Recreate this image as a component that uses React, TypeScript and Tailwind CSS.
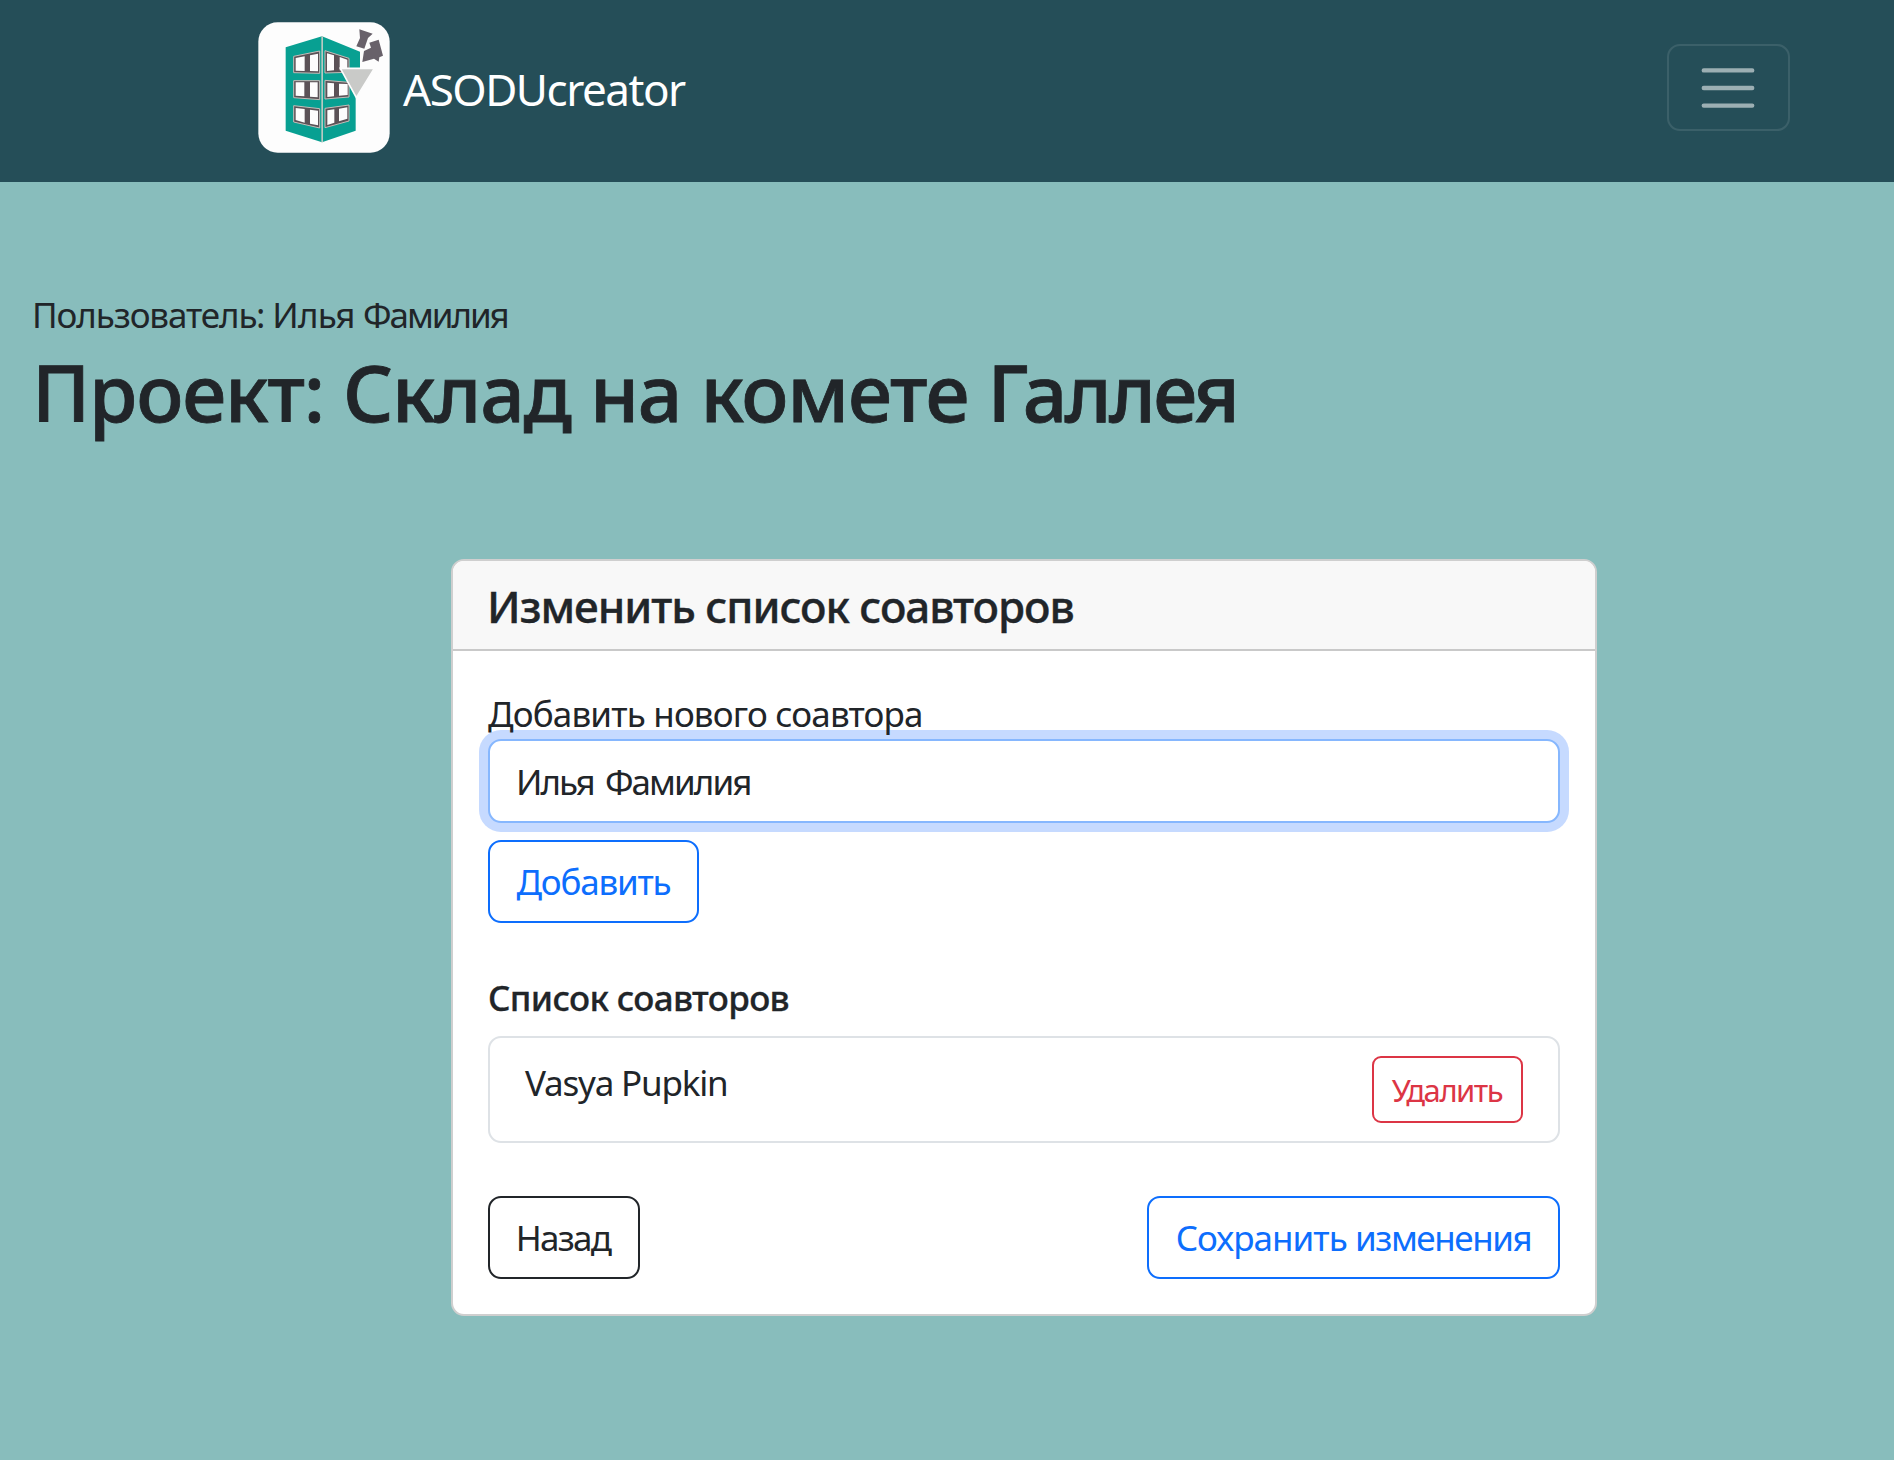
import type { ReactNode } from 'react';

function Logo() {
  return (
    <svg viewBox="24 21 396 393" className="h-[131px] w-[132px] shrink-0" aria-hidden="true">
      <rect x="25" y="22" width="394" height="391" rx="58" fill="#fdfdfd" />
      <path d="M107 97 216 64V382L107 347Z" fill="#08a092" />
      <path d="M216 64 330 110V160H317V347L216 382Z" fill="#08a092" />
      <path d="M216.500 64V382" stroke="#b9c9c2" strokeWidth="5" />
      <g fill="#5b5257" stroke="#c5bdb9" strokeWidth="3">
        <path d="M131 124 209 108V175L131 173Z" />
        <path d="M131 197H209V254L131 248Z" />
        <path d="M131 272 209 281V339L131 321Z" />
        <path d="M225 107 297 130V172L225 174Z" />
        <path d="M225 196 297 202V246L225 252Z" />
        <path d="M225 280 297 270V318L225 338Z" />
      </g>
      <g fill="#fdfdfd">
        <path d="M137 129 164 124V168L137 167Z" />
        <path d="M180 121 204 116V169L180 168Z" />
        <path d="M137 202H163V244L137 242Z" />
        <path d="M180 202H203V247L180 245Z" />
        <path d="M137 279 164 282V323L137 315Z" />
        <path d="M180 284 204 287V331L180 326Z" />
        <path d="M231 115 252 121V166L231 168Z" />
        <path d="M269 126 292 134V166H269Z" />
        <path d="M232 203 252 205V244L232 246Z" />
        <path d="M267 206 293 207V240L267 242Z" />
        <path d="M232 286 253 283V323L232 330Z" />
        <path d="M267 281 292 277V311L267 319Z" />
      </g>
      <path d="M271 160H373L319 248Z" fill="#c9cac8" stroke="#fdfdfd" strokeWidth="5" />
      <path d="M328 43 368 56 354 69 343 101 319 94 330 69Z" fill="#68616a" />
      <path d="M386 74 399 122 388 127 386 140 372 131 337 141 342 108 363 98 358 83Z" fill="#68616a" />
    </svg>
  );
}

function Button({ className, children }: { className: string; children: ReactNode }) {
  return (
    <button
      type="button"
      className={`flex items-center justify-center whitespace-pre border-2 ${className}`}
    >
      {children}
    </button>
  );
}

export default function App() {
  return (
    <div className="min-h-[1460px] bg-[#88bdbc] font-['Noto_Sans',sans-serif] text-[35px] leading-[54px] text-[#212529]">
      <header className="flex h-[182px] items-start justify-between bg-[#254e58] pt-[22px] pr-[104px] pl-[258px]">
        <a className="flex items-center gap-[13px] text-[44px] tracking-[-1.48px] text-white">
          <Logo />
          <span className="pt-[3px]">ASODUcreator</span>
        </a>
        <button
          type="button"
          aria-label="Меню"
          className="mt-[22px] flex h-[87px] w-[123px] items-center justify-center rounded-[13px] border-2 border-white/10"
        >
          <svg viewBox="0 0 30 30" className="mr-px h-[66px] w-[66px]" aria-hidden="true">
            <path
              d="M4 7h22M4 15h22M4 23h22"
              stroke="#fff"
              strokeOpacity="0.55"
              strokeLinecap="round"
              strokeMiterlimit="10"
              strokeWidth="2"
            />
          </svg>
        </button>
      </header>

      <section className="pt-[106px] pl-8">
        <p className="tracking-[-1.1px]">
          Пользователь: <span className="tracking-[-0.8px]">Илья </span>
          <span className="tracking-[-2.07px]">Фамилия</span>
        </p>
        <h1 className="mt-[3px] text-[78.5px] leading-[94px] font-medium tracking-[-1.22px] [-webkit-text-stroke:0.8px_#212529]">
          Проект: Склад на комете <span className="tracking-[-2.7px]">Галлея</span>
        </h1>
      </section>

      <main className="mt-[120px] ml-[451px] w-[1146px] overflow-hidden rounded-[13px] border-2 border-[#cfcfcf] bg-white">
        <h2 className="flex h-[90px] items-center border-b-2 border-[#c9c9c9] bg-[#f8f8f8] pt-[2px] pl-[34px] text-[44px] font-medium tracking-[-1.037px] [-webkit-text-stroke:0.4px_#212529]">
          Изменить список соавторов
        </h2>
        <div className="px-[35px] pt-[36px] pb-[35px]">
          <label htmlFor="coauthor" className="relative z-10 block h-[52px] tracking-[-0.818px]">
            Добавить нового соавтора
          </label>
          <input
            id="coauthor"
            defaultValue="Илья Фамилия"
            className="block h-[84px] w-full rounded-[13px] border-2 border-[#86b7fe] bg-white px-[26px] tracking-[-1.95px] shadow-[0_0_0_9px_#c6daff] outline-none [word-spacing:4px]"
          />
          <Button className="mt-[17px] h-[83px] w-[211px] rounded-[13px] border-[#0d6efd] tracking-[-1.2px] text-[#0d6efd]">
            Добавить
          </Button>

          <h3 className="mt-[48px] font-medium tracking-[-0.64px] [-webkit-text-stroke:0.3px_#212529]">
            Список соавторов
          </h3>
          <ul className="mt-[11px]">
            <li className="flex h-[107px] items-start justify-between rounded-[13px] border-2 border-[#dee2e6] pt-[18px] pr-[35px] pl-[35px] tracking-[-1.212px]">
              <span>Vasya Pupkin</span>
              <Button className="h-[67px] w-[151px] rounded-[9px] border-[#dc3545] pr-px text-[31px] tracking-[-1.485px] text-[#dc3545]">
                Удалить
              </Button>
            </li>
          </ul>

          <div className="mt-[53px] flex justify-between">
            <Button className="h-[83px] w-[152px] rounded-[13px] border-[#212529] pr-[2px] tracking-[-1.75px]">
              Назад
            </Button>
            <Button className="h-[83px] w-[413px] rounded-[13px] border-[#0d6efd] tracking-[-0.95px] text-[#0d6efd]">
              <span>
                Сохранить <span className="tracking-[-1.42px]">изменения</span>
              </span>
            </Button>
          </div>
        </div>
      </main>
    </div>
  );
}
